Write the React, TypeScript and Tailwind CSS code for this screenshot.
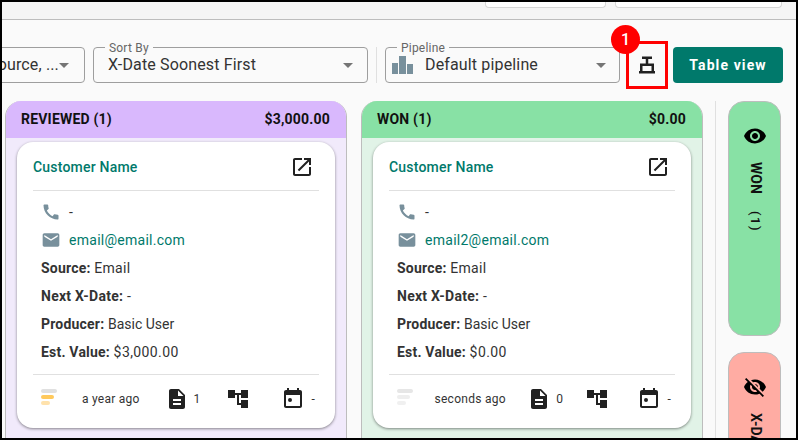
import React from "react";

// --- Material icon paths ---
const ICONS = {
  open: "M19 19H5V5h7V3H5c-1.11 0-2 .9-2 2v14c0 1.1.89 2 2 2h14c1.1 0 2-.9 2-2v-7h-2v7zM14 3v2h3.59l-9.83 9.83 1.41 1.41L19 6.41V10h2V3h-7z",
  phone: "M20.01 15.38c-1.23 0-2.42-.2-3.53-.56-.35-.12-.74-.03-1.01.24l-1.57 1.97c-2.83-1.35-5.48-3.9-6.89-6.83l1.95-1.66c.27-.28.35-.67.24-1.02-.37-1.11-.56-2.3-.56-3.53 0-.54-.45-.99-.99-.99H4.19C3.65 3 3 3.24 3 3.99 3 13.28 10.73 21 20.01 21c.71 0 .99-.63.99-1.18v-3.45c0-.54-.45-.99-.99-.99z",
  email: "M20 4H4c-1.1 0-1.99.9-1.99 2L2 18c0 1.1.9 2 2 2h16c1.1 0 2-.9 2-2V6c0-1.1-.9-2-2-2zm0 4l-8 5-8-5V6l8 5 8-5v2z",
  doc: "M14 2H6c-1.1 0-1.99.9-1.99 2L4 20c0 1.1.89 2 1.99 2H18c1.1 0 2-.9 2-2V8l-6-6zm2 16H8v-2h8v2zm0-4H8v-2h8v2zm-3-5V3.5L18.5 9H13z",
  tree: "M22 11V3h-7v3H9V3H2v8h7V8h2v10h4v3h7v-8h-7v3h-2V8h2v3h7z",
  event: "M9 11a2 2 0 100 4 2 2 0 000-4zM16 1v2H8V1H6v2H5c-1.11 0-1.99.9-1.99 2L3 19c0 1.1.89 2 2 2h14c1.1 0 2-.9 2-2V5c0-1.1-.9-2-2-2h-1V1h-2zm3 18H5V8h14v11z",
  eye: "M12 4.5C7 4.5 2.73 7.61 1 12c1.73 4.39 6 7.5 11 7.5s9.27-3.11 11-7.5c-1.73-4.39-6-7.5-11-7.5zM12 17c-2.76 0-5-2.24-5-5s2.24-5 5-5 5 2.24 5 5-2.24 5-5 5zm0-8c-1.66 0-3 1.34-3 3s1.34 3 3 3 3-1.34 3-3-1.34-3-3-3z",
  eyeOff: "M12 7c2.76 0 5 2.24 5 5 0 .65-.13 1.26-.36 1.83l2.92 2.92c1.51-1.26 2.7-2.89 3.43-4.75-1.73-4.39-6-7.5-11-7.5-1.4 0-2.74.25-3.98.7l2.16 2.16C10.74 7.13 11.35 7 12 7zM2 4.27l2.28 2.28.46.46C3.08 8.3 1.78 10.02 1 12c1.73 4.39 6 7.5 11 7.5 1.55 0 3.03-.3 4.38-.84l.42.42L19.73 22 21 20.73 3.27 3 2 4.27zM7.53 9.8l1.55 1.55c-.05.21-.08.43-.08.65 0 1.66 1.34 3 3 3 .22 0 .44-.03.65-.08l1.55 1.55c-.67.33-1.41.53-2.2.53-2.76 0-5-2.24-5-5 0-.79.2-1.53.53-2.2zm4.31-.78l3.15 3.15.02-.16c0-1.66-1.34-3-3-3l-.17.01z",
};

const Icon = ({ d, className }: { d: string; className: string }) => (
  <svg viewBox="0 0 24 24" fill="currentColor" className={className}>
    <path d={d} />
  </svg>
);

const Arrow = () => (
  <span className="block w-0 h-0 border-x-[5px] border-x-transparent border-t-[5px] border-t-[#757575]" />
);

const PriorityBars = ({ colors }: { colors: string[] }) => (
  <div className="flex flex-col gap-[2px] w-[16px] mb-[5px]">
    <div className={`h-[4px] w-[16px] rounded-[2px] ${colors[0]}`} />
    <div className={`h-[4px] w-[13px] rounded-[2px] ${colors[1]}`} />
    <div className={`h-[4px] w-[9px] rounded-[2px] ${colors[2]}`} />
  </div>
);

interface Lead {
  email: string;
  value: string;
  age: string;
  docs: number;
  bars: string[];
}

const LeadCard = ({ lead }: { lead: Lead }) => (
  <div className="bg-white rounded-[16px] shadow-[0_1px_3px_rgba(0,0,0,0.45)] px-4 h-[286px] flex flex-col shrink-0 tracking-[0.2px]">
    <div className="flex items-center justify-between h-[49px] pt-[2px] border-b border-[#e0e0e0] shrink-0">
      <span className="text-[#00796b] text-[14px] font-medium">Customer Name</span>
      <Icon d={ICONS.open} className="w-[24px] h-[24px] text-[#212121] mr-[5px] mb-[1px]" />
    </div>
    <div className="pt-[7px] pl-2 text-[14px] text-[#333] flex flex-col h-[184px] border-b border-[#e0e0e0] shrink-0">
      <div className="flex items-center h-[28px]">
        <Icon d={ICONS.phone} className="w-[20px] h-[20px] text-[#78909c] mr-2" />
        <span>-</span>
      </div>
      <div className="flex items-center h-[28px]">
        <Icon d={ICONS.email} className="w-[20px] h-[20px] text-[#78909c] mr-2" />
        <span className="text-[#00796b] tracking-[0.27px]">{lead.email}</span>
      </div>
      <div className="h-[28px] leading-[28px]"><b className="font-bold">Source:</b> <span className="tracking-[0.3px]">Email</span></div>
      <div className="h-[28px] leading-[28px]"><b className="font-bold tracking-[0.25px]">Next X-Date:</b> -</div>
      <div className="h-[28px] leading-[28px]"><b className="font-bold">Producer:</b> <span className="tracking-normal">Basic User</span></div>
      <div className="h-[28px] leading-[28px]"><b className="font-bold">Est. Value:</b> <span className="tracking-[0.4px]">{lead.value}</span></div>
    </div>
    <div className="flex items-center justify-between text-[12px] text-[#333] h-[47px] pl-2 pr-[4px] pt-[1px] tracking-[0.27px]">
      <PriorityBars colors={lead.bars} />
      <span className="whitespace-nowrap">{lead.age}</span>
      <div className="flex items-center">
        <Icon d={ICONS.doc} className="w-[24px] h-[24px] text-[#212121]" />
        <span className="ml-[5px]">{lead.docs}</span>
      </div>
      <Icon d={ICONS.tree} className="w-[24px] h-[24px] text-[#212121] mr-[7px]" />
      <div className="flex items-center">
        <Icon d={ICONS.event} className="w-[24px] h-[24px] text-[#212121]" />
        <span className="ml-[6px]">-</span>
      </div>
    </div>
  </div>
);

const Column = ({ title, total, head, body, lead }: { title: string; total: string; head: string; body: string; lead: Lead }) => (
  <div className={`w-[342px] rounded-t-[16px] border-x border-[#bdbdbd] flex flex-col shrink-0 overflow-hidden ${body}`}>
    <div className={`h-[37px] shrink-0 flex items-center justify-between pl-[15px] pr-[16px] text-[14px] font-bold text-[#111] tracking-[0.2px] ${head}`}>
      <span>{title}</span>
      <span>{total}</span>
    </div>
    <div className="px-[11px] pt-1">
      <LeadCard lead={lead} />
    </div>
  </div>
);

export default function App() {
  return (
    <div className="w-[798px] h-[440px] border-2 border-black bg-[#fafafa] overflow-hidden flex flex-col font-['Roboto',sans-serif]">
      {/* top strip */}
      <div className="h-[18px] shrink-0 bg-[#f5f5f5] border-b border-[#bdbdbd] flex justify-end gap-[9px] pr-[14px]">
        <div className="w-[121px] h-[6px] bg-white border border-t-0 border-[#d6d6d6] rounded-b-[4px]" />
        <div className="w-[167px] h-[6px] bg-white border border-t-0 border-[#d6d6d6] rounded-b-[4px]" />
      </div>

      {/* filters */}
      <div className="h-[81px] shrink-0 flex justify-end items-start pt-[27px] pr-[13px] overflow-hidden text-[16px] text-[#333]">
        <div className="relative w-[200px] h-[36px] shrink-0 border border-[#9e9e9e] rounded-[4px] flex items-center justify-end pr-[25px]">
          <span className="tracking-[0.15px]">Source, ...</span>
          <span className="absolute right-[15px] top-[15px]"><Arrow /></span>
        </div>
        <div className="relative w-[275px] h-[36px] shrink-0 ml-[8px] border border-[#9e9e9e] rounded-[4px] flex items-center justify-between pl-[14px] pr-[14px]">
          <span className="absolute -top-[6px] left-[11px] px-1 bg-[#fafafa] text-[12px] leading-[12px] text-[#666] tracking-[0.2px]">Sort By</span>
          <span className="tracking-[0.15px]">X-Date Soonest First</span>
          <Arrow />
        </div>
        <div className="w-px h-[36px] bg-[#e0e0e0] ml-[8px] shrink-0" />
        <div className="relative w-[235px] h-[36px] shrink-0 ml-[8px] border border-[#9e9e9e] rounded-[4px] flex items-center pl-[6px] pr-[13px]">
          <span className="absolute -top-[6px] left-[11px] px-1 bg-[#fafafa] text-[12px] leading-[12px] text-[#666] tracking-[0.2px]">Pipeline</span>
          <svg viewBox="0 0 21 18" className="w-[21px] h-[18px] shrink-0">
            <rect x="0" y="7" width="6" height="11" fill="#78909c" />
            <rect x="7" y="0" width="7" height="18" fill="#78909c" />
            <rect x="15" y="8" width="6" height="10" fill="#78909c" />
          </svg>
          <span className="ml-[12px] flex-1 tracking-[0.15px]">Default pipeline</span>
          <Arrow />
        </div>
        <div className="relative w-[42px] h-[48px] shrink-0 -mt-[6px] ml-[6px] border-[3px] border-[#ff0000] flex items-center justify-center">
          <svg viewBox="0 0 18 18" fill="#212121" className="w-[18px] h-[18px]">
            <rect x="4" y="0.5" width="10" height="2.5" />
            <rect x="7.75" y="3" width="2.5" height="5" />
            <rect x="2" y="7.5" width="14" height="2.5" />
            <rect x="2" y="10" width="2.5" height="5" />
            <rect x="13.5" y="10" width="2.5" height="5" />
            <rect x="1" y="15" width="16" height="2.5" />
          </svg>
          <span className="absolute -top-[19px] -left-[18px] w-[29px] h-[29px] rounded-full bg-[#ff0000] text-white text-[16px] font-medium flex items-center justify-center">1</span>
        </div>
        <div className="w-[110px] h-[36px] shrink-0 ml-[5px] rounded-[4px] bg-[#00796b] text-white text-[14px] font-bold tracking-[1.1px] flex items-center justify-center">
          Table view
        </div>
      </div>

      {/* board */}
      <div className="flex-1 min-h-0 flex pl-[3px] overflow-hidden">
        <Column
          title="REVIEWED (1)"
          total="$3,000.00"
          head="bg-[#d9b8fd]"
          body="bg-[#f1eafb]"
          lead={{ email: "email@email.com", value: "$3,000.00", age: "a year ago", docs: 1, bars: ["bg-[#e0e0e0]", "bg-[#ffc95c]", "bg-[#ffe2ac]"] }}
        />
        <div className="w-[14px] shrink-0" />
        <Column
          title="WON (1)"
          total="$0.00"
          head="bg-[#88e1a5]"
          body="bg-[#e1f3e7]"
          lead={{ email: "email2@email.com", value: "$0.00", age: "seconds ago", docs: 0, bars: ["bg-[#e6e6e6]", "bg-[#eeeeee]", "bg-[#f0f0f0]"] }}
        />
        <div className="w-px bg-[#e0e0e0] ml-[12px] shrink-0" />
        <div className="ml-[12px] w-[53px] shrink-0 flex flex-col gap-[16px]">
          <div className="h-[235px] shrink-0 rounded-[16px] border border-[#bdbdbd] bg-[#88e1a5] flex flex-col items-center pt-[22px] text-[#111]">
            <Icon d={ICONS.eye} className="w-[24px] h-[24px] text-black" />
            <span className="[writing-mode:vertical-rl] text-[14px] font-bold mt-[14px] mb-[17px] ml-[2px]">WON</span>
            <span className="[writing-mode:vertical-rl] text-[13px] font-medium tracking-[1.5px] ml-[2px]">(1)</span>
          </div>
          <div className="h-[120px] shrink-0 rounded-[16px] border border-[#bdbdbd] bg-[#ffaca3] flex flex-col items-center pt-[22px] text-[#111]">
            <Icon d={ICONS.eyeOff} className="w-[24px] h-[24px] text-black" />
            <span className="[writing-mode:vertical-rl] text-[14px] font-bold mt-[14px] ml-[2px] whitespace-nowrap">X-DATE</span>
          </div>
        </div>
      </div>
    </div>
  );
}
